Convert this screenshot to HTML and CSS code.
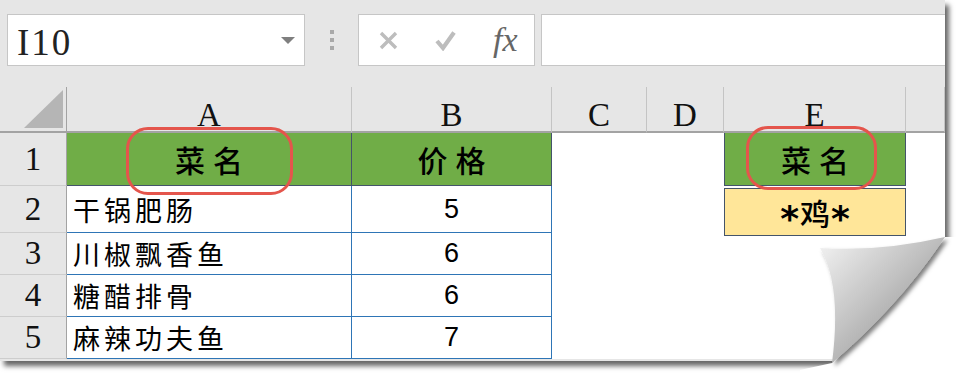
FILE: index.html
```html
<!DOCTYPE html>
<html lang="zh-CN">
<head>
  <meta charset="UTF-8" />
  <title>菜名 筛选</title>
  <link rel="stylesheet" href="styles.css">
</head>
<body>
  <div class="sheet">
    <div class="toolbar">
      <div class="name-box">
        <span class="cell-ref">I10</span>
        <span class="caret"></span>
      </div>
      <div class="grip"><i></i><i></i><i></i></div>
      <div class="fx-box">
        <svg class="icon" width="19" height="19" viewBox="0 0 19 19">
          <path d="M2 2 L17 17 M17 2 L2 17" stroke="#bdbdbd" stroke-width="3.4" fill="none" />
        </svg>
        <svg class="icon" width="21" height="21" viewBox="0 0 21 21">
          <path d="M2 11 L8 18 L19 2.5" stroke="#bdbdbd" stroke-width="4.2" fill="none" />
        </svg>
        <span class="fx">fx</span>
      </div>
      <div class="formula"></div>
    </div>

    <div class="grid">
      <div class="ch corner"><span class="tri"></span></div>
      <div class="ch">A</div>
      <div class="ch">B</div>
      <div class="ch">C</div>
      <div class="ch">D</div>
      <div class="ch">E</div>
      <div class="ch"></div>

      <div class="rh">1</div>
      <div class="hdr">菜名</div>
      <div class="hdr">价格</div>
      <div class="blank"></div>
      <div class="blank"></div>
      <div class="hdr hdr-e">菜名</div>
      <div class="blank"></div>

      <div class="rh">2</div>
      <div class="dat txt">干锅肥肠</div>
      <div class="dat num">5</div>
      <div class="blank"></div>
      <div class="blank"></div>
      <div class="blank"><div class="crit"><span class="ast">*</span>鸡<span class="ast">*</span></div></div>
      <div class="blank"></div>

      <div class="rh">3</div>
      <div class="dat txt">川椒飘香鱼</div>
      <div class="dat num">6</div>
      <div class="blank"></div>
      <div class="blank"></div>
      <div class="blank"></div>
      <div class="blank"></div>

      <div class="rh">4</div>
      <div class="dat txt">糖醋排骨</div>
      <div class="dat num">6</div>
      <div class="blank"></div>
      <div class="blank"></div>
      <div class="blank"></div>
      <div class="blank"></div>

      <div class="rh">5</div>
      <div class="dat txt">麻辣功夫鱼</div>
      <div class="dat num">7</div>
      <div class="blank"></div>
      <div class="blank"></div>
      <div class="blank"></div>
      <div class="blank"></div>
    </div>

    <!-- red call-out rings -->
    <div class="ring ring-a"></div>
    <div class="ring ring-e"></div>
  </div>

  <!-- page curl at the bottom right -->
  <svg class="curl" width="160" height="153" viewBox="0 0 160 153">
    <defs>
      <linearGradient id="fold" x1="0" y1="0" x2="1" y2="1">
        <stop offset="0" stop-color="#f4f4f4" />
        <stop offset="0.45" stop-color="#c2c2c2" />
        <stop offset="1" stop-color="#828282" />
      </linearGradient>
      <filter id="drop" x="-20%" y="-20%" width="150%" height="150%">
        <feDropShadow dx="3" dy="3" stdDeviation="2" flood-color="#000" flood-opacity="0.5" />
      </filter>
    </defs>
    <polygon points="145,12 160,12 160,153 0,153 0,145 32,138" fill="#fff" />
    <path d="M20,23 Q80,27 145,12 Q100,80 32,138 Q42,60 20,23 Z" fill="url(#fold)" filter="url(#drop)" />
  </svg>
</body>
</html>
```

FILE: styles.css
```css
body {
  margin: 0;
  background: #ffffff;
  width: 960px;
  height: 378px;
  position: relative;
  overflow: hidden;
}

.sheet {
  position: relative;
  width: 945px;
  height: 361px;
  background: #e6e6e6;
  box-shadow: 4px 5px 5px rgba(0, 0, 0, 0.6);
}

/* formula bar */
.toolbar {
  display: flex;
  align-items: flex-start;
  height: 87px;
  padding-top: 14px;
  box-sizing: border-box;
}

.name-box {
  display: flex;
  align-items: center;
  justify-content: space-between;
  margin-left: 7px;
  width: 298px;
  height: 52px;
  box-sizing: border-box;
  border: 1px solid #c6c6c6;
  background: #fff;
  padding: 0 9px 0 9px;
}

.cell-ref {
  font-family: "Liberation Serif", serif;
  font-size: 37px;
  letter-spacing: 2px;
  color: #222;
  line-height: 1;
  padding-top: 4px;
}

.caret {
  width: 0;
  height: 0;
  border-left: 7px solid transparent;
  border-right: 7px solid transparent;
  border-top: 7px solid #7f7f7f;
}

.grip {
  display: flex;
  flex-direction: column;
  gap: 4px;
  width: 53px;
  align-items: center;
  padding-top: 16px;
}

.grip i {
  width: 4px;
  height: 4px;
  background: #a9a9a9;
}

.fx-box {
  display: flex;
  align-items: center;
  width: 177px;
  height: 52px;
  box-sizing: border-box;
  border: 1px solid #c6c6c6;
  background: #fff;
  padding-left: 20px;
  gap: 37px;
}

.fx {
  font-family: "Liberation Serif", serif;
  font-style: italic;
  font-size: 34px;
  color: #666;
  line-height: 1;
}

.formula {
  flex: 1;
  height: 52px;
  margin-left: 6px;
  box-sizing: border-box;
  border: 1px solid #c6c6c6;
  border-right: none;
  background: #fff;
}

/* worksheet */
.grid {
  display: grid;
  grid-template-columns: 67px 285px 200px 95px 77px 182px 39px;
  grid-template-rows: 46px 53px 47px 42px 42px 42px;
}

.grid > div {
  box-sizing: border-box;
}

.ch {
  border-right: 1px solid #c4c4c4;
  border-bottom: 2px solid #a3a3a3;
  font-family: "Liberation Serif", serif;
  font-size: 33px;
  text-align: center;
  line-height: 1;
  padding-top: 12px;
  color: #111;
}

.ch:last-child {
  border-right: none;
}

.corner {
  position: relative;
  border-right: 1px solid #a3a3a3;
}

.tri {
  position: absolute;
  right: 3px;
  bottom: 3px;
  width: 0;
  height: 0;
  border-left: 39px solid transparent;
  border-bottom: 38px solid #b5b5b5;
}

.rh {
  border-right: 1px solid #a3a3a3;
  border-bottom: 1px solid #cdcdcd;
  font-family: "Liberation Serif", serif;
  font-size: 33px;
  text-align: center;
  display: flex;
  align-items: center;
  justify-content: center;
  color: #111;
}

.blank {
  background: #fff;
}

.hdr {
  background: #70ad47;
  border-right: 1px solid #44546a;
  border-bottom: 1px solid #44546a;
  font-family: "Noto Sans CJK SC", sans-serif;
  font-size: 30px;
  font-weight: 500;
  letter-spacing: 8px;
  text-indent: 8px;
  display: flex;
  align-items: center;
  justify-content: center;
  color: #000;
}

.hdr-e {
  border-left: 1px solid #44546a;
}

.dat {
  background: #fff;
  border-right: 1px solid #2e75b6;
  border-bottom: 1px solid #2e75b6;
  display: flex;
  align-items: center;
  color: #000;
}

.txt {
  font-family: "Noto Sans CJK SC", sans-serif;
  font-size: 27px;
  letter-spacing: 4px;
  padding-left: 6px;
}

.num {
  justify-content: center;
  font-family: "Liberation Sans", sans-serif;
  font-size: 27px;
}

.crit {
  position: relative;
  z-index: 1;
  margin-top: 2px;
  height: 48px;
  box-sizing: border-box;
  border: 1px solid #44546a;
  background: #ffe699;
  font-family: "Noto Sans CJK SC", sans-serif;
  font-size: 30px;
  font-weight: 500;
  display: flex;
  align-items: center;
  justify-content: center;
}

.ast {
  font-family: "DejaVu Sans", sans-serif;
  font-weight: 700;
  font-size: 36px;
  line-height: 1;
  position: relative;
  top: 7px;
  margin: 0 1px;
}

/* red call-out rings */
.ring {
  position: absolute;
  z-index: 2;
  border: 3px solid #e4554c;
  border-radius: 22px;
  box-sizing: border-box;
}

.ring-a {
  left: 126px;
  top: 127px;
  width: 167px;
  height: 68px;
}

.ring-e {
  left: 746px;
  top: 126px;
  width: 131px;
  height: 64px;
}

.curl {
  position: absolute;
  left: 800px;
  top: 225px;
}
```
